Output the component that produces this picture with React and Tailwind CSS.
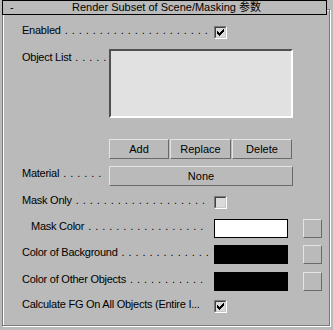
import React from "react";

function Label({ text, dots, w, indent = "", mt = "" }) {
  const d = Array.from({ length: dots }, () => ".").join(" ");
  return (
    <div className={`flex shrink-0 overflow-hidden whitespace-nowrap leading-[12px] h-[12px] ${w} ${mt}`}>
      <span className={`shrink-0 tracking-[-0.25px] ${indent}`}>{text}</span>
      <span className="ml-[4px] shrink-0 tracking-[0.45px]">{d}</span>
    </div>
  );
}

function Check({ checked, mt = "" }) {
  return (
    <div className={`ml-[5px] h-[13px] w-[13px] shrink-0 border border-t-[#7a7a7a] border-l-[#7a7a7a] border-b-white border-r-white ${mt}`}>
      <div className="h-full w-full border border-t-[#404040] border-l-[#404040] border-b-[#c8c8c8] border-r-[#c8c8c8] bg-[#dadada]">
        {checked && (
          <svg width="9" height="9" viewBox="0 0 9 9" shapeRendering="crispEdges" className="block">
            <rect x="1" y="3" width="1" height="3" fill="#000" />
            <rect x="2" y="4" width="1" height="3" fill="#000" />
            <rect x="3" y="5" width="1" height="3" fill="#000" />
            <rect x="4" y="4" width="1" height="3" fill="#000" />
            <rect x="5" y="3" width="1" height="3" fill="#000" />
            <rect x="6" y="2" width="1" height="3" fill="#000" />
            <rect x="7" y="1" width="1" height="3" fill="#000" />
          </svg>
        )}
      </div>
    </div>
  );
}

function Btn({ children, w }) {
  return (
    <div className={`flex h-[20px] shrink-0 items-center justify-center border border-t-[#e4e4e4] border-l-[#e4e4e4] border-b-[#6a6a6a] border-r-[#6a6a6a] leading-[12px] ${w}`}>
      {children}
    </div>
  );
}

function ColorRow({ label, dots, color, indent, mt }) {
  return (
    <div className={`flex h-[19px] ${mt}`}>
      <Label text={label} dots={dots} w="w-[187px]" indent={indent} mt="mt-[1px]" />
      <div className={`ml-[5px] h-[19px] w-[74px] shrink-0 border border-black ${color}`} />
      <div className="ml-[15px] h-[19px] w-[19px] shrink-0 border border-t-[#e4e4e4] border-l-[#e4e4e4] border-b-[#6a6a6a] border-r-[#6a6a6a]" />
    </div>
  );
}

export default function App() {
  return (
    <div className="h-[330px] w-[333px] overflow-hidden bg-[#bababa] text-[11px] text-black font-['Liberation_Sans','Noto_Sans_CJK_SC',sans-serif]">
      <div className="relative z-10 ml-[2px] flex h-[15px] w-[325px] border border-black bg-[#bababa] leading-[13px]">
        <span className="w-[20px] shrink-0 pl-[7px]">-</span>
        <span className="flex-1 text-center whitespace-nowrap">Render Subset of Scene/Masking 参数</span>
        <span className="w-[16px] shrink-0" />
      </div>
      <div className="ml-[2px] -mt-[6px] flex h-[317px] w-[328px] flex-col border border-[#7a7a7a] pl-[19px] pt-[14px] shadow-[inset_1px_1px_0_#fff,1px_1px_0_#fff]">
        {/* Enabled */}
        <div className="flex h-[15px]">
          <Label text="Enabled" dots={21} w="w-[187px]" />
          <Check checked mt="mt-[2px]" />
        </div>
        {/* Object list */}
        <div className="mt-[10px] flex h-[69px]">
          <Label text="Object List" dots={5} w="w-[86px]" mt="mt-[2px]" />
          <div className="ml-[1px] h-[69px] w-[184px] shrink-0 border-2 border-t-[#505050] border-l-[#505050] border-b-white border-r-white bg-[#e1e1e1]" />
        </div>
        {/* Buttons */}
        <div className="ml-[87px] mt-[21px] flex gap-[1px]">
          <Btn w="w-[60px]">Add</Btn>
          <Btn w="w-[61px]">Replace</Btn>
          <Btn w="w-[60px]">Delete</Btn>
        </div>
        {/* Material */}
        <div className="mt-[7px] flex h-[20px]">
          <Label text="Material" dots={6} w="w-[80px]" mt="mt-[1px]" />
          <div className="ml-[7px]">
            <Btn w="w-[184px]">None</Btn>
          </div>
        </div>
        {/* Mask only */}
        <div className="mt-[8px] flex h-[15px]">
          <Label text="Mask Only" dots={19} w="w-[187px]" />
          <Check mt="mt-[2px]" />
        </div>
        <ColorRow label="Mask Color" dots={17} color="bg-white" indent="pl-[9px]" mt="mt-[10px]" />
        <ColorRow label="Color of Background" dots={13} color="bg-black" indent="" mt="mt-[7px]" />
        <ColorRow label="Color of Other Objects" dots={11} color="bg-black" indent="" mt="mt-[8px]" />
        {/* Calculate FG */}
        <div className="mt-[7px] flex h-[15px]">
          <div className="w-[187px] shrink-0 whitespace-nowrap leading-[12px] tracking-[-0.25px]">Calculate FG On All Objects (Entire I...</div>
          <Check checked mt="mt-[2px]" />
        </div>
      </div>
    </div>
  );
}
